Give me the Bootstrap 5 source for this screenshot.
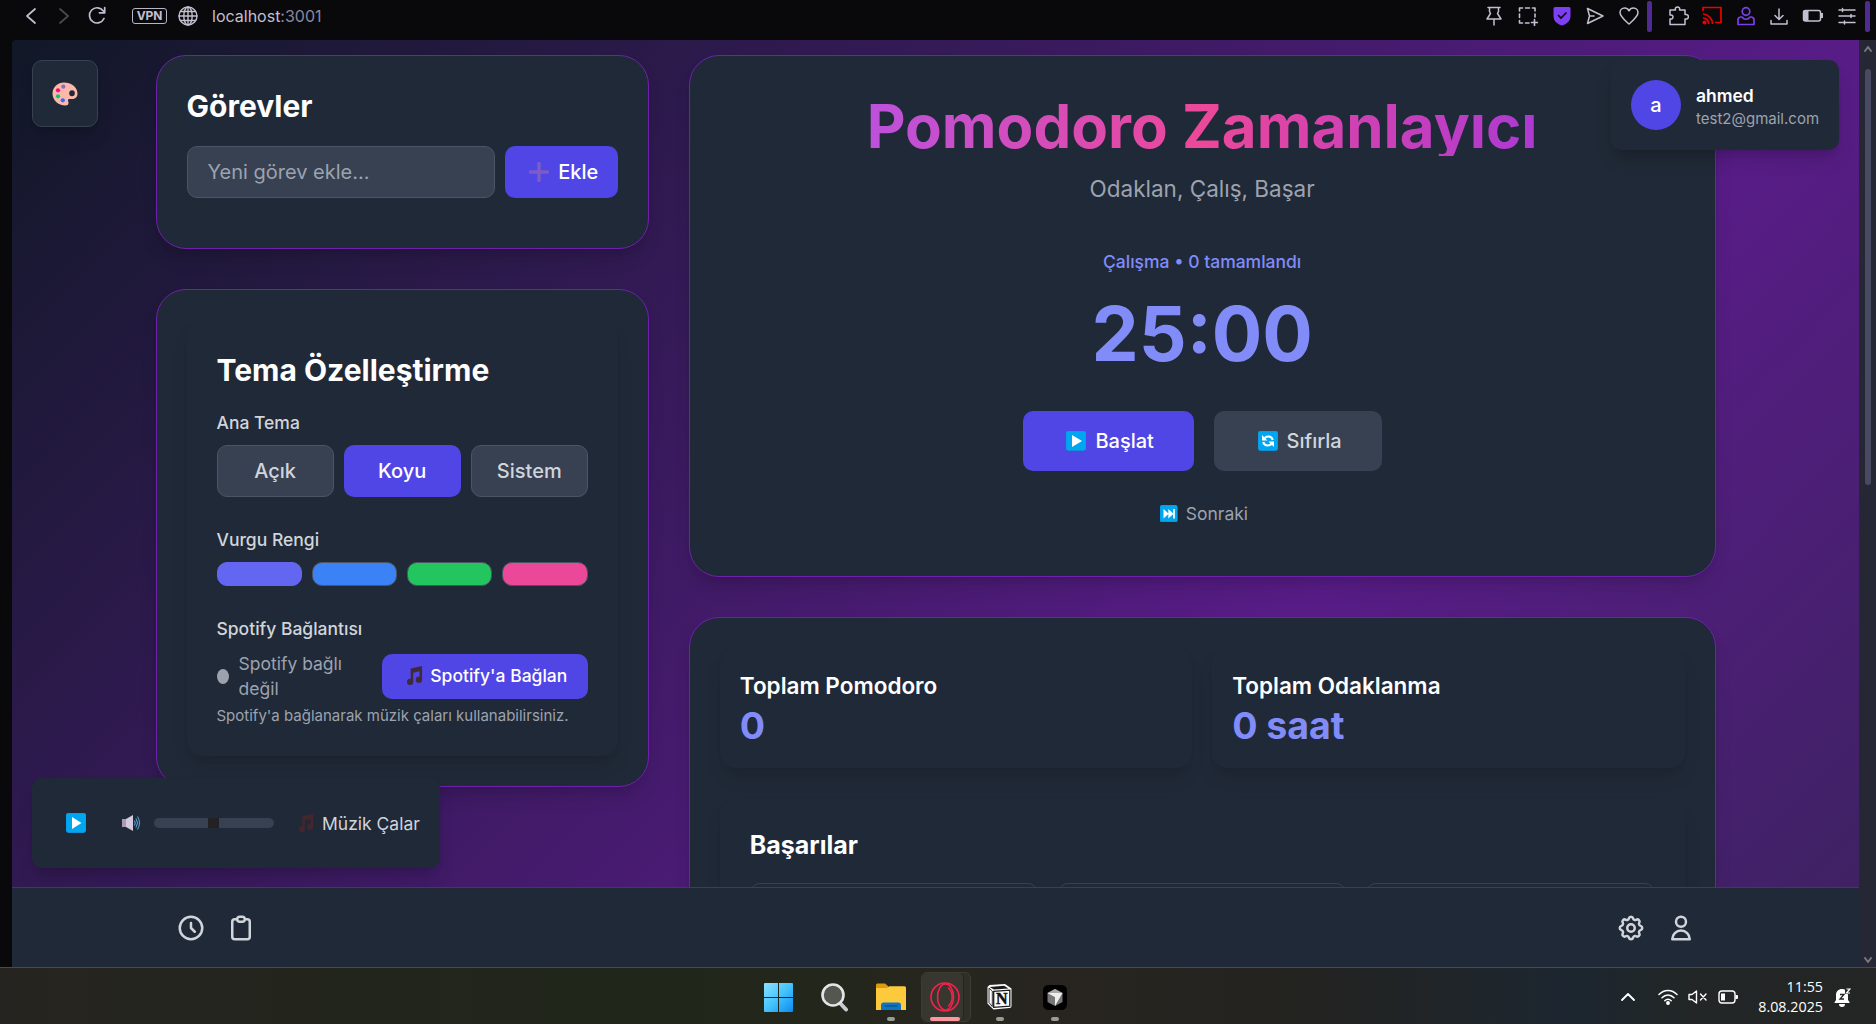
<!DOCTYPE html>
<html lang="tr">
<head>
<meta charset="utf-8">
<meta name="viewport" content="width=device-width, initial-scale=1">
<title>Pomodoro Zamanlayıcı</title>
<link href="https://cdn.jsdelivr.net/npm/bootstrap@5.3.0/dist/css/bootstrap.min.css" rel="stylesheet">
<style>
:root{--panel:#202937;--line:#374151;--accent:#4f46e5;--indigo:#818cf8;--soft:#9ca3af;--light:#d1d5db}
body{height:1024px;background:#09090b;font-family:Inter,"Liberation Sans",sans-serif;font-size:17.5px;line-height:25px;color:#fff}
svg{display:block;flex:none}
.ln{fill:none;stroke:currentColor;stroke-linecap:round;stroke-linejoin:round}
/* browser bar */
.topbar{height:40px;padding-bottom:8px;color:#c3bfd0;font-size:16px}
.topbar .back{margin-left:25px}
.topbar .fwd{margin-left:21px;opacity:.35}
.topbar .reload{margin-left:17px}
.topbar .globe{margin-left:11px}
.topbar .address{margin-left:14px}
.topbar .port{color:#8b87a3}
.topbar .tools{margin-right:6px}
.slot{width:33.7px;padding-right:3px}
.vpn{width:35px;height:16px;margin-left:25px;border:1.5px solid #b9b5c8;border-radius:3px;font-size:12px;line-height:13px;font-weight:700;letter-spacing:-.2px}
.sep{width:5px;height:31px;border-radius:2px;background:#4f2a93}
.tool-gap{width:10.5px}
.gutter{width:12px}
.scroller{width:17px;background:#252834;color:#77777c;padding:6px 0 4px}
.thumb{width:6px;height:416px;margin-top:17px;border-radius:3px;background:#484a61}
/* page */
.stage{height:0;overflow:hidden;border-top-left-radius:4px;background:linear-gradient(to bottom right,#111827,#581c87 50%,#1f2937) 0 0/1847px 1900px}
.wrap{width:1560px;margin:0 auto;padding-top:15px;display:grid;grid-template-columns:493.3px 1fr;column-gap:40px}
.panel{background:var(--panel);border:1px solid #6f21ae;border-radius:30px;box-shadow:0 12px 19px -4px rgba(0,0,0,.14),0 5px 8px -5px rgba(0,0,0,.12)}
.sub-panel{background:var(--panel);border-radius:15px;box-shadow:0 12px 19px -4px rgba(0,0,0,.1),0 5px 8px -5px rgba(0,0,0,.1)}
.stack{gap:40px}
h1,h2,h3{margin:0}
h2{font-size:30px;line-height:40px;font-weight:700}
h2.mid-title{font-size:25px;line-height:35px}
.p30{padding:30px}
.mt30{margin-top:30px}
.mb20{margin-bottom:20px}
.mb30{margin-bottom:30px}
.my20{margin-top:20px;margin-bottom:20px}
.g10{gap:10px}
.g20{gap:20px}
.in{background:var(--line);border:1px solid #4b5563;border-radius:10px;height:52px;font-size:20px;padding:0 20px;color:#fff}
.form-control.in:focus{background:var(--line)}
.in::placeholder{color:var(--soft)}
.bt{border:1px solid transparent;border-radius:10px;font-size:20px;font-weight:500;line-height:30px;padding:0;color:#fff;display:flex;align-items:center;justify-content:center}
.bt-on{background:var(--accent)}
.bt-off{background:var(--line);color:var(--light)}
.bt-line{border-color:#4b5563}
.bt-add{width:113px;gap:9px;padding-left:5px}
.bt-link-up{width:206px;height:45px;font-size:17.5px;gap:7px;padding-left:3px}
.bt-big{width:171px;height:60px;gap:9px;padding-left:4px}
.bt-big.bt-off{width:168px}
.lab{color:var(--light);font-weight:500;margin-bottom:10px}
.seg{height:52px;flex:1 1 0}
.swatch{height:24px;flex:1 1 0;border:1px solid #4b5563;border-radius:10px}
.sw-indigo{background:#6366f1;border-color:#6366f1}
.sw-blue{background:#3b82f6}
.sw-green{background:#22c55e}
.sw-pink{background:#ec4899}
.dot{width:12px;height:15px;border-radius:50%;background:var(--soft);flex:none}
.dim{color:var(--soft)}
.tiny{font-size:15px;line-height:20px}
.hint{margin-top:5px}
.hero{height:522px;padding-top:40px}
h1{font-size:60px;line-height:60px;font-weight:700;background:linear-gradient(90deg,#a855f7,#ec4899 50%,#9333ea);-webkit-background-clip:text;background-clip:text;color:transparent;align-self:stretch;margin:0 40px;text-align:center}
.motto{font-size:22.5px;line-height:35px;margin-top:15px}
.phase{color:var(--indigo);margin-top:43px;font-weight:500}
.clock{font-size:75px;line-height:75px;font-weight:700;color:var(--indigo);margin-top:22px}
.controls{gap:20px;margin-top:40px}
.skip{gap:8px;margin-top:30px;padding-left:4px}
.stat{height:120px;padding:20px}
.stat h3{font-size:22.5px;line-height:35px;font-weight:600}
.stat div{font-size:37.5px;line-height:45px;font-weight:700;color:var(--indigo)}
.tile{height:120px;border:1px solid var(--line);border-radius:10px;flex:1 1 0}
.float-box{position:absolute;background:var(--panel);border-radius:10px;box-shadow:0 12px 19px -4px rgba(0,0,0,.16),0 5px 8px -5px rgba(0,0,0,.14)}
.palette{left:20px;top:20px;width:66px;height:67px;border:1px solid var(--line)}
.user{right:20px;top:20px;width:228px;height:90px;padding:20px;gap:15px}
.user .who{padding-top:4px}
.user .nick{font-weight:600;line-height:20px;margin-bottom:3px}
.avatar{width:50px;height:50px;border-radius:50%;background:var(--accent);font-size:20px;font-weight:500}
.player{left:20px;bottom:19px;width:408px;height:90px;padding-left:34px}
.player .speaker{margin-left:36px}
.player .tune{margin-left:23px}
.player .label{margin-left:8px;color:var(--light)}
.range{width:120px;height:10px;margin-left:14px;border-radius:5px;background:var(--line)}
.range i{width:11px;height:10px;background:#222;margin-left:54px;display:block}
.dock{height:80px;background:var(--panel);border-top:1px solid var(--line);color:var(--light);padding:0 153.5px 0 154px}
.dock span{width:50px;display:flex;justify-content:center}
/* taskbar */
.taskbar{height:57px;border-top:1px solid #494b49;background:linear-gradient(90deg,#262420,#20261a 33%,#24261c 46%,#282520 55%,#24231f 68%,#1c2630 84%,#222626 90%,#242524);font-family:"Open Sans","Noto Sans",sans-serif;font-size:14.3px;line-height:20px}
.apps{padding-left:751px}
.app{width:55.3px;height:56px;padding-top:2px;position:relative}
.app.on::before{content:"";position:absolute;left:4px;top:4px;width:50px;height:50px;border:1px solid #3d3c34;border-radius:6px;background:#2f2e27}
.app.on::after{content:"";position:absolute;left:5px;top:5px;width:42px;height:48px;border-right:1px solid #24231d;border-radius:5px;background:#37362f}
.app svg{position:relative;z-index:1}
.run{position:absolute;bottom:3px;width:8px;height:4px;border-radius:2px;background:#9b9b95;z-index:2}
.app.on .run{width:30px;background:#ff959f;left:13px}
.tray{margin-right:25px;padding-top:2px}
.tray .wifi{margin-left:23px}
.tray .mute{margin-left:10px}
.tray .power{margin-left:11px}
.tray .when{width:85px}
.tray .bell{margin-left:11px}
</style>
</head>
<body class="d-flex flex-column overflow-hidden">

<svg width="0" height="0" class="position-absolute">
  <defs>
    <g id="tilebg"><rect width="20" height="20" rx="2.4" fill="#0f8fd6"/><rect x=".3" y=".3" width="19.4" height="18.6" rx="2" fill="#00a6f0"/></g>
    <g id="note"><path d="M6 2.5 18 0v14.2a3.3 3.3 0 1 1-2.700-3V5.600L8.700 7v9.600A3.300 3.300 0 1 1 6 13.500z"/></g>
  </defs>
</svg>

<header class="topbar d-flex align-items-center flex-shrink-0">
  <svg width="12" height="16" viewBox="0 0 12 16" class="ln back" stroke-width="1.7"><path d="M10 1 2 8l8 7"/></svg>
  <svg width="12" height="16" viewBox="0 0 12 16" class="ln fwd" stroke-width="1.7"><path d="m2 1 8 7-8 7"/></svg>
  <svg width="20" height="20" viewBox="0 0 20 20" class="ln reload" stroke-width="1.7"><path d="M17 12.5A7.6 7.6 0 1 1 16.3 5M17.7 1.5v5.3h-5.3"/></svg>
  <div class="vpn text-center">VPN</div>
  <svg width="20" height="20" viewBox="0 0 20 20" class="ln globe" stroke-width="1.4"><circle cx="10" cy="10" r="9"/><ellipse cx="10" cy="10" rx="4.2" ry="9"/><path d="M10 1v18M1 10h18M2.5 5.5h15M2.5 14.5h15"/></svg>
  <div class="address">localhost<span class="port">:3001</span></div>
  <div class="tools d-flex align-items-center ms-auto">
    <div class="slot d-flex justify-content-center"><svg width="20" height="20" viewBox="0 0 20 20" class="ln" stroke-width="1.5"><path d="M4 1.500h12M5.500 1.500v4l1 2-3.500 5.500h14l-3.500-5.500 1-2v-4M10 13v6"/></svg></div>
    <div class="slot d-flex justify-content-center"><svg width="20" height="20" viewBox="0 0 20 20" class="ln" stroke-width="1.6"><path d="M1.500 5V2h3M7.500 2h4M14.500 2h2.500v3M17 8v3M1.500 8v3.500M1.500 14.500V17h3M7.500 17h3.500M13.500 16.500h6M16.500 13.500v6"/></svg></div>
    <div class="slot d-flex justify-content-center"><svg width="20" height="20" viewBox="0 0 20 20"><path d="M3 1h14a1.500 1.500 0 0 1 1.500 1.500V10c0 5-4 8.500-8.500 9.500C5.500 18.500 1.500 15 1.500 10V2.500A1.500 1.500 0 0 1 3 1z" fill="#7c3ff2"/><path d="m6 9 3 3 5.500-5.500" fill="none" stroke="#0c0a14" stroke-width="1.7"/></svg></div>
    <div class="slot d-flex justify-content-center"><svg width="20" height="20" viewBox="0 0 20 20" class="ln" stroke-width="1.5"><path d="m2.500 2.500 15.500 7.500-15.500 7.500 2-7.500zM4.500 10H9"/></svg></div>
    <div class="slot d-flex justify-content-center"><svg width="20" height="20" viewBox="0 0 20 20" class="ln" stroke-width="1.5"><path d="M10 18C5 13.500 1 10.500 1 6.500A4.600 4.600 0 0 1 5.600 2C7.600 2 9.200 3.200 10 4.800 10.800 3.200 12.400 2 14.400 2A4.600 4.600 0 0 1 19 6.500C19 10.500 15 13.500 10 18z"/></svg></div>
    <div class="sep"></div><div class="tool-gap"></div>
    <div class="slot d-flex justify-content-center"><svg width="21" height="20" viewBox="0 0 21 20" class="ln" stroke-width="1.5"><path d="M2 18.500V13c4 1 4-5 0-4V4h5.500C6 0 13 0 11.500 4H17v4.500c4.500-1 4.500 5.500 0 4.500v5.500z"/></svg></div>
    <div class="slot d-flex justify-content-center"><svg width="20" height="20" viewBox="0 0 20 20" fill="none" stroke="#ef0000" stroke-width="1.7"><path d="M1 5V1.500h18v15h-6M1 8a10 10 0 0 1 9.500 10M1 12a6 6 0 0 1 5.800 6"/><circle cx="2.5" cy="16.5" r="2" fill="#ef0000" stroke="none"/></svg></div>
    <div class="slot d-flex justify-content-center"><svg width="20" height="20" viewBox="0 0 20 20" fill="none" stroke="#7c3fe8" stroke-linejoin="round" stroke-width="1.7"><circle cx="10" cy="5.500" r="3.8"/><path d="M6 11H4.500A3 3 0 0 0 2 14v4.500h16V14a3 3 0 0 0-2.500-3H14c-2 3-6 3-8 0z"/></svg></div>
    <div class="slot d-flex justify-content-center"><svg width="20" height="20" viewBox="0 0 20 20" class="ln" stroke-width="1.5"><path d="M10 3v10M6 9.500l4 4 4-4M2 14.500v3.500h16v-3.500"/></svg></div>
    <div class="slot d-flex justify-content-center"><svg width="21" height="20" viewBox="0 0 21 20"><rect x="1.500" y="4.5" width="17" height="10.500" rx="2" class="ln" stroke-width="1.5"/><path d="M1.500 4.500h5v10.500h-5zM18.500 7h2.500v5h-2.500z" fill="currentColor"/></svg></div>
    <div class="slot d-flex justify-content-center"><svg width="20" height="20" viewBox="0 0 20 20" class="ln" stroke-width="1.5"><path d="M2 4h16M2 10h16M2 16.500h16M5.500 2.500v3M14 8.500v3M7.500 15v3"/></svg></div>
    <div class="sep"></div>
  </div>
</header>

<div class="d-flex flex-grow-1 overflow-hidden">
  <div class="gutter"></div>
  <div class="d-flex flex-column flex-grow-1">
    <main class="stage position-relative flex-grow-1">
      <div class="wrap">
        <div class="d-flex flex-column stack">
          <section class="panel p30">
            <h2>Görevler</h2>
            <div class="d-flex g10 my20">
              <input class="form-control in" placeholder="Yeni görev ekle...">
              <button class="bt bt-on bt-add flex-shrink-0"><svg width="20" height="20" viewBox="0 0 19 19"><path d="M9.500 1.500v16M1.500 9.500h16" stroke="#7b5cc9" stroke-width="3.4" stroke-linecap="round"/></svg>Ekle</button>
            </div>
          </section>
          <section class="panel p30">
            <div class="sub-panel p30">
              <h2 class="mb20">Tema Özelleştirme</h2>
              <div class="lab">Ana Tema</div>
              <div class="d-flex g10 mb30">
                <button class="bt bt-off bt-line seg">Açık</button>
                <button class="bt bt-on seg">Koyu</button>
                <button class="bt bt-off bt-line seg">Sistem</button>
              </div>
              <div class="lab">Vurgu Rengi</div>
              <div class="d-flex g10 mb30">
                <div class="swatch sw-indigo"></div>
                <div class="swatch sw-blue"></div>
                <div class="swatch sw-green"></div>
                <div class="swatch sw-pink"></div>
              </div>
              <div class="lab">Spotify Bağlantısı</div>
              <div class="d-flex align-items-center justify-content-between">
                <div class="d-flex align-items-center g10 dim"><span class="dot"></span><span>Spotify bağlı<br>değil</span></div>
                <button class="bt bt-on bt-link-up"><svg width="18" height="20" viewBox="0 0 19 21" fill="#3f2a38"><use href="#note"/></svg>Spotify'a Bağlan</button>
              </div>
              <div class="dim tiny hint">Spotify'a bağlanarak müzik çaları kullanabilirsiniz.</div>
            </div>
          </section>
        </div>

        <div class="d-flex flex-column stack">
          <section class="panel hero d-flex flex-column align-items-center">
            <h1>Pomodoro Zamanlayıcı</h1>
            <div class="dim motto">Odaklan, Çalış, Başar</div>
            <div class="phase">Çalışma • 0 tamamlandı</div>
            <div class="clock">25:00</div>
            <div class="d-flex controls">
              <button class="bt bt-on bt-big"><svg width="20" height="20" viewBox="0 0 20 20"><use href="#tilebg"/><path d="m6 4 10 6-10 6z" fill="#fff"/></svg>Başlat</button>
              <button class="bt bt-off bt-big"><svg width="20" height="20" viewBox="0 0 20 20"><use href="#tilebg"/><g fill="none" stroke="#fff" stroke-width="2.2"><path d="M6 8C8 4.500 13.500 4.500 14.800 9M14 12C12 15.500 6.500 15.500 5.200 11"/></g><path d="M4 4v5.500h5.500zM16 16v-5.500h-5.500z" fill="#fff"/></svg>Sıfırla</button>
            </div>
            <div class="d-flex align-items-center dim skip"><svg width="17.5" height="17.5" viewBox="0 0 20 20"><use href="#tilebg"/><path d="m4 4.500 6 5.500-6 5.500zM9.500 4.500l6 5.500-6 5.500zM15 4.500h2v11h-2z" fill="#fff"/></svg>Sonraki</div>
          </section>
          <section class="panel p30">
            <div class="d-flex g20">
              <div class="sub-panel stat flex-fill w-50"><h3>Toplam Pomodoro</h3><div>0</div></div>
              <div class="sub-panel stat flex-fill w-50"><h3>Toplam Odaklanma</h3><div>0 saat</div></div>
            </div>
            <div class="sub-panel p30 mt30">
              <h2 class="mid-title mb20">Başarılar</h2>
              <div class="d-flex g20"><div class="tile"></div><div class="tile"></div><div class="tile"></div></div>
            </div>
          </section>
        </div>
      </div>

      <div class="float-box palette d-flex align-items-center justify-content-center">
        <svg width="26" height="24" viewBox="0 0 26 24"><path d="M12 .500C19 .500 25.500 5 25.500 11.500c0 4-2.500 5.500-5.500 5.500-2.500 0-4-.3-4 1.200 0 1 .5 1.500.5 2.800 0 1.800-1.300 2.500-3 2.500C6 23.500.500 18 .500 11.500S6 .500 12 .500z" fill="#fbb8ab"/><ellipse cx="20" cy="11.2" rx="2.800" ry="3" fill="#1f2937"/><circle cx="11.300" cy="4.700" r="2.100" fill="#8b6bc4"/><circle cx="6" cy="8.300" r="2.100" fill="#f50a78"/><circle cx="6" cy="14.300" r="2.100" fill="#0fc867"/><circle cx="10.800" cy="18.300" r="2.100" fill="#3f66f0"/></svg>
      </div>

      <div class="float-box user d-flex align-items-center">
        <div class="avatar d-flex align-items-center justify-content-center flex-shrink-0">a</div>
        <div class="who"><div class="nick">ahmed</div><div class="dim tiny">test2@gmail.com</div></div>
      </div>

      <div class="float-box player d-flex align-items-center">
        <svg width="20" height="20" viewBox="0 0 20 20"><use href="#tilebg"/><path d="m6 4 9.500 6L6 16z" fill="#fff"/></svg>
        <svg width="18" height="16" viewBox="0 0 18 16" class="speaker"><path d="M0 4h4v8H0z" fill="#a79bb5"/><path d="M4 4l7-4v16l-7-4z" fill="#d5c9de"/><g fill="none" stroke="#5aaee8" stroke-width="1"><path d="M12.500 5.500q1.500 2.500 0 5M14 3.500q3 4.500 0 9M15.500 1.500q4 6.500 0 13"/></g></svg>
        <div class="range"><i></i></div>
        <svg width="17" height="19" viewBox="0 0 19 21" fill="#45262d" class="tune"><use href="#note"/></svg>
        <span class="label">Müzik Çalar</span>
      </div>
    </main>

    <nav class="dock d-flex align-items-center flex-shrink-0">
      <span><svg width="30" height="30" viewBox="0 0 24 24" class="ln" stroke-width="2"><path d="M12 8v4l3 3m6-3a9 9 0 11-18 0 9 9 0 0118 0z"/></svg></span>
      <span><svg width="30" height="30" viewBox="0 0 24 24" class="ln" stroke-width="2"><path d="M9 5H7a2 2 0 00-2 2v12a2 2 0 002 2h10a2 2 0 002-2V7a2 2 0 00-2-2h-2M9 5a2 2 0 002 2h2a2 2 0 002-2M9 5a2 2 0 012-2h2a2 2 0 012 2"/></svg></span>
      <span class="ms-auto"><svg width="30" height="30" viewBox="0 0 24 24" class="ln" stroke-width="2"><path d="M10.325 4.317c.426-1.756 2.924-1.756 3.350 0a1.724 1.724 0 002.573 1.066c1.543-.94 3.310.826 2.370 2.370a1.724 1.724 0 001.065 2.572c1.756.426 1.756 2.924 0 3.350a1.724 1.724 0 00-1.066 2.573c.94 1.543-.826 3.310-2.370 2.370a1.724 1.724 0 00-2.572 1.065c-.426 1.756-2.924 1.756-3.350 0a1.724 1.724 0 00-2.573-1.066c-1.543.94-3.310-.826-2.370-2.370a1.724 1.724 0 00-1.065-2.572c-1.756-.426-1.756-2.924 0-3.350a1.724 1.724 0 001.066-2.573c-.94-1.543.826-3.310 2.370-2.370.996.608 2.296.07 2.572-1.065z"/><circle cx="12" cy="12" r="3"/></svg></span>
      <span><svg width="30" height="30" viewBox="0 0 24 24" class="ln" stroke-width="2"><path d="M16 7a4 4 0 11-8 0 4 4 0 018 0zM12 14a7 7 0 00-7 7h14a7 7 0 00-7-7z"/></svg></span>
    </nav>
  </div>
  <div class="scroller d-flex flex-column align-items-center">
    <svg width="8" height="6" viewBox="0 0 8 6" class="ln" stroke-width="2"><path d="m1 5 3-4 3 4"/></svg>
    <div class="thumb"></div>
    <svg width="8" height="6" viewBox="0 0 8 6" class="ln mt-auto" stroke-width="2"><path d="m1 1 3 4 3-4"/></svg>
  </div>
</div>

<footer class="taskbar d-flex flex-shrink-0">
  <div class="apps d-flex">
    <div class="app d-flex align-items-center justify-content-center"><svg width="29" height="29" viewBox="0 0 29 29"><defs><linearGradient id="w" gradientUnits="userSpaceOnUse" x1="0" y1="0" x2="29" y2="29"><stop stop-color="#8be3ff"/><stop offset=".5" stop-color="#45c3fb"/><stop offset="1" stop-color="#0a8bf0"/></linearGradient></defs><path d="M0 1a1 1 0 0 1 1-1h13v14H0zM15 0h13a1 1 0 0 1 1 1v13H15zM0 15h14v14H1a1 1 0 0 1-1-1zM15 15h14v13a1 1 0 0 1-1 1H15z" fill="url(#w)"/></svg></div>
    <div class="app d-flex align-items-center justify-content-center"><svg width="28" height="30" viewBox="0 0 28 30"><path d="m19 20 7 7.500" stroke="#c9cace" stroke-width="4" stroke-linecap="round"/><circle cx="13" cy="13" r="10.500" fill="#55564f" stroke="#e4e5e8" stroke-width="2.600"/></svg></div>
    <div class="app d-flex align-items-center justify-content-center ps-1"><svg width="30" height="28" viewBox="0 0 30 28"><path d="M0 2a1.500 1.500 0 0 1 1.500-1.500H9L12 3v8H0z" fill="#e09a0b"/><path d="M0 5h11l2-1.700h15.500A1.500 1.500 0 0 1 30 4.800V27H0z" fill="#fdca3e"/><path d="M5 27v-5a2.500 2.500 0 0 1 2.500-2.500h15A2.500 2.500 0 0 1 25 22v5z" fill="#0f74c4"/><path d="M8.500 23h13" stroke="#0b4d8c" stroke-width="1.200"/></svg><i class="run"></i></div>
    <div class="app on d-flex align-items-center justify-content-center"><svg width="30" height="30" viewBox="0 0 30 30" fill="none" stroke="#f5224d"><circle cx="15" cy="15" r="14" stroke-width="1.600"/><ellipse cx="15.500" cy="15" rx="8" ry="13" stroke-width="1.600"/><path d="M18 5.500c5.500 5 5.500 14 0 19" stroke-width="1.400"/></svg><i class="run"></i></div>
    <div class="app d-flex align-items-center justify-content-center"><svg width="25" height="26" viewBox="0 0 25 26"><path d="M2.500 1 18 0l6.500 4.500V22a2 2 0 0 1-2 2L6.500 25.500 .500 19.500V3z" fill="#fff"/><path d="m2.500 3 14.500-1.200 4.500 2.700L7 5.600z" fill="#1a1a1a"/><path d="M2 4.200 5.300 7v15.500L2 18.500z" fill="#fff" stroke="#1a1a1a" stroke-width=".9"/><path d="M6.700 7.300 22.800 6.200v16L6.700 23.400z" fill="#fff" stroke="#1a1a1a" stroke-width="1.300"/><text x="14.800" y="20.300" font-family="Liberation Serif" font-weight="700" font-size="16" text-anchor="middle" fill="#111" stroke="#111" stroke-width=".5">N</text></svg><i class="run"></i></div>
    <div class="app d-flex align-items-center justify-content-center"><svg width="24" height="25" viewBox="0 0 24 25"><rect width="24" height="25" rx="5.500" fill="#000"/><path d="m12 4 7.500 4v9L12 21l-7.500-4V8z" fill="#777"/><path d="m12 4 7.500 4L12 12 4.500 8z" fill="#aaa"/><path d="M4.500 8h15L12 21v-9z" fill="#eee"/></svg><i class="run"></i></div>
  </div>
  <div class="tray d-flex align-items-center ms-auto">
    <svg width="14" height="8" viewBox="0 0 14 8" class="ln" stroke-width="1.8"><path d="m1 7 6-6 6 6"/></svg>
    <svg width="20" height="16" viewBox="0 0 20 16" class="ln wifi" stroke-width="1.5"><path d="M1 5.500c5-5.500 13-5.500 18 0M4 8.700c3.500-3.700 8.500-3.700 12 0M6.800 11.700c2-2 4.400-2 6.400 0"/><circle cx="10" cy="14" r="1.200" fill="currentColor"/></svg>
    <svg width="19" height="14" viewBox="0 0 19 14" class="ln mute" stroke-width="1.4"><path d="M1 4.500h3L8.500 1v12L4 9.500H1zM12.500 4l5.500 6M18 4l-5.500 6"/></svg>
    <svg width="20" height="14" viewBox="0 0 20 14" class="power"><rect x="1" y="1" width="16" height="12" rx="3" class="ln" stroke-width="1.4"/><path d="M3 3.500h4v7H3zM17.500 5H19a1 1 0 0 1 1 1v2a1 1 0 0 1-1 1h-1.500z" fill="#fff"/></svg>
    <div class="text-end when">11:55<br>8.08.2025</div>
    <svg width="17" height="19" viewBox="0 0 17 19" class="bell"><path d="M8 1C4.500 1 2 3.500 2 7v5L.500 14.500v.500h15V14L14 12V7c0-3.500-2.500-6-6-6zM5 16h6a3 3 0 0 1-6 0z" fill="#fff"/><path d="M11 0h6v6h-6z" fill="#242524"/><path d="M6 6.500h4L6 11h4" fill="none" stroke="#242524" stroke-width="1.300"/><path d="M12.500 1h3.500l-3.500 4H16" fill="none" stroke="#fff" stroke-width="1.200"/></svg>
  </div>
</footer>

<script src="https://cdn.jsdelivr.net/npm/bootstrap@5.3.0/dist/js/bootstrap.bundle.min.js"></script>
</body>
</html>
